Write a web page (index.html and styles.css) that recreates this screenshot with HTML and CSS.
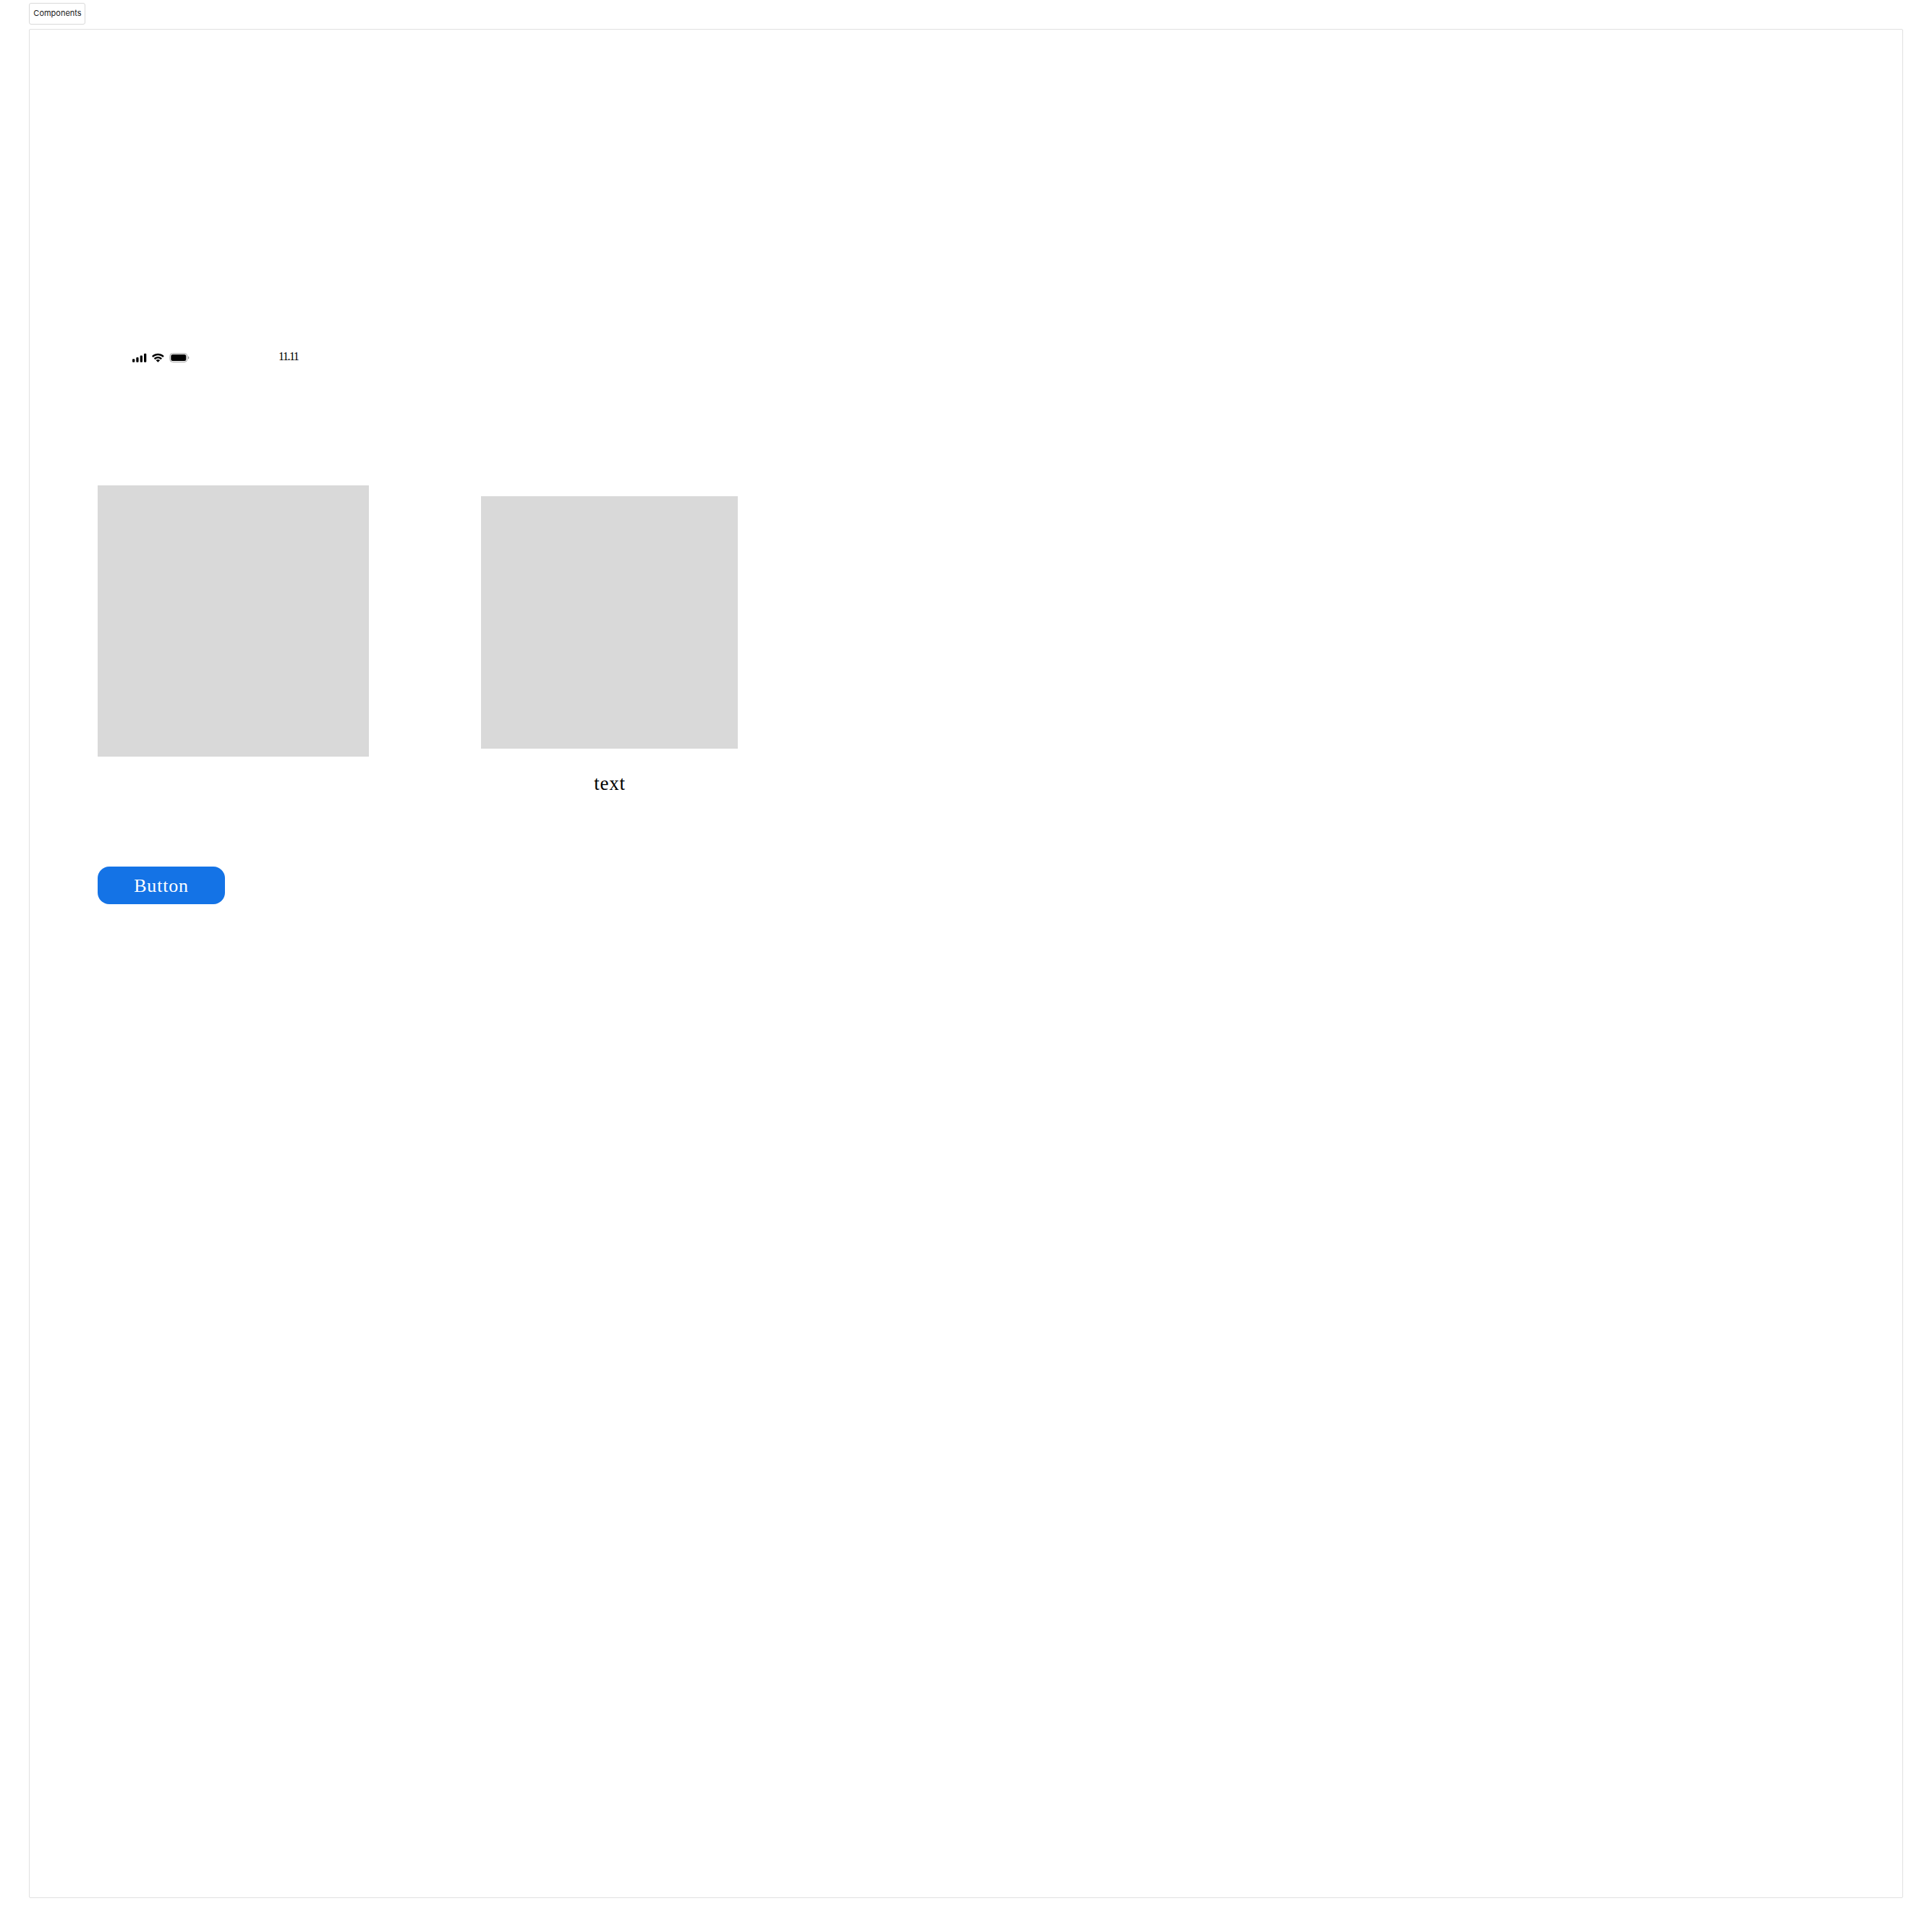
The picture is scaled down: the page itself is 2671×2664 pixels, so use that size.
FILE: index.html
```html
<!DOCTYPE html>
<html lang="en">
<head>
<meta charset="utf-8">
<title>Components</title>
<link rel="stylesheet" href="styles.css">
</head>
<body>
<header class="section-label">Components</header>
<main class="board">
  <div class="status-bar">
    <svg class="status-icons" width="80" height="16" viewBox="0 0.6 80 16">
      <rect x="0" y="8.8" width="3.3" height="4.6" rx="1"/>
      <rect x="5.3" y="6.6" width="3.3" height="6.8" rx="1"/>
      <rect x="10.7" y="4" width="3.3" height="9.4" rx="1"/>
      <rect x="16" y="1.3" width="3.3" height="12.1" rx="1"/>
      <g transform="translate(26.9 1.3)">
        <path d="M8.5 2.5C10.9 2.5 13.2 3.4 14.9 5.1Q15.2 5.3 15.4 5.1L16.7 3.8Q16.9 3.5 16.7 3.3C12.1-1.1 4.9-1.1.3 3.3Q.1 3.5.3 3.8L1.6 5.1Q1.8 5.3 2.1 5.1C3.8 3.4 6.1 2.5 8.5 2.5Z"/>
        <path d="M8.5 6.8C9.8 6.8 11.1 7.3 12.1 8.2Q12.3 8.4 12.6 8.2L13.9 6.9Q14.1 6.6 13.9 6.4C10.8 3.5 6.2 3.5 3.1 6.4Q2.9 6.6 3.1 6.9L4.4 8.2Q4.7 8.4 4.9 8.2C5.9 7.3 7.2 6.8 8.5 6.8Z"/>
        <path d="M11.1 9.6Q11.3 9.4 11.1 9.1C9.6 7.9 7.4 7.9 5.9 9.1Q5.7 9.4 5.9 9.6L8.2 11.9Q8.5 12.2 8.8 11.9Z"/>
      </g>
      <rect class="battery-shell" x="51.8" y="1.1" width="24" height="12" rx="3.8"/>
      <rect x="53.3" y="2.5" width="21" height="9.2" rx="2.5"/>
      <path class="battery-cap" d="M77 5V9.2C77.9 8.8 78.4 8 78.4 7.1S77.9 5.4 77 5Z"/>
    </svg>
    <span class="clock">11.11</span>
  </div>
  <div class="cards">
    <div class="tile"></div>
    <figure class="card">
      <div class="card-image"></div>
      <figcaption class="card-text">text</figcaption>
    </figure>
  </div>
  <button class="button" type="button">Button</button>
</main>
</body>
</html>
```
FILE: styles.css
```css
* {
  box-sizing: border-box;
}

body {
  margin: 0;
  padding: 4px 40px 0;
  background: #fff;
  color: #000;
}

.section-label {
  display: flex;
  align-items: center;
  justify-content: center;
  width: 78px;
  height: 30px;
  margin-bottom: 6px;
  padding: 0 0 2px 1px;
  border: 1px solid #d9d9d9;
  border-radius: 3px;
  color: #1a1a1a;
  font: 11px/1 Inter, sans-serif;
}

.board {
  display: flex;
  flex-direction: column;
  align-items: flex-start;
  width: 2591px;
  height: 2584px;
  padding: 447px 94px 0;
  border: 1px solid #e0e0e0;
  border-radius: 2px;
  font-family: "Liberation Serif", serif;
}

.status-bar {
  display: flex;
  align-items: flex-start;
  height: 16px;
  margin: 0 0 167px 48px;
}

.status-icons {
  display: block;
}

.battery-shell {
  fill: none;
  stroke: #a6a6a6;
}

.battery-cap {
  fill: #999;
}

.clock {
  margin: -4px 0 0 122px;
  font-size: 16px;
  line-height: 18px;
  letter-spacing: -1.5px;
}

.cards {
  display: flex;
  gap: 155px;
  height: 375px;
}

.tile {
  width: 375px;
  height: 375px;
  background: #d9d9d9;
}

.card {
  width: 355px;
  margin: 15px 0 0;
}

.card-image {
  height: 349px;
  background: #d9d9d9;
}

.card-text {
  margin-top: 33px;
  padding-left: 1px;
  font-size: 27px;
  line-height: 30px;
  letter-spacing: 0.8px;
  text-align: center;
}

.button {
  width: 176px;
  height: 52px;
  margin-top: 152px;
  padding: 2px 0 0;
  border: 0;
  border-radius: 16px;
  background: #1473e6;
  color: #fff;
  font: 26px/30px "Liberation Serif", serif;
  letter-spacing: 0.8px;
}
```
